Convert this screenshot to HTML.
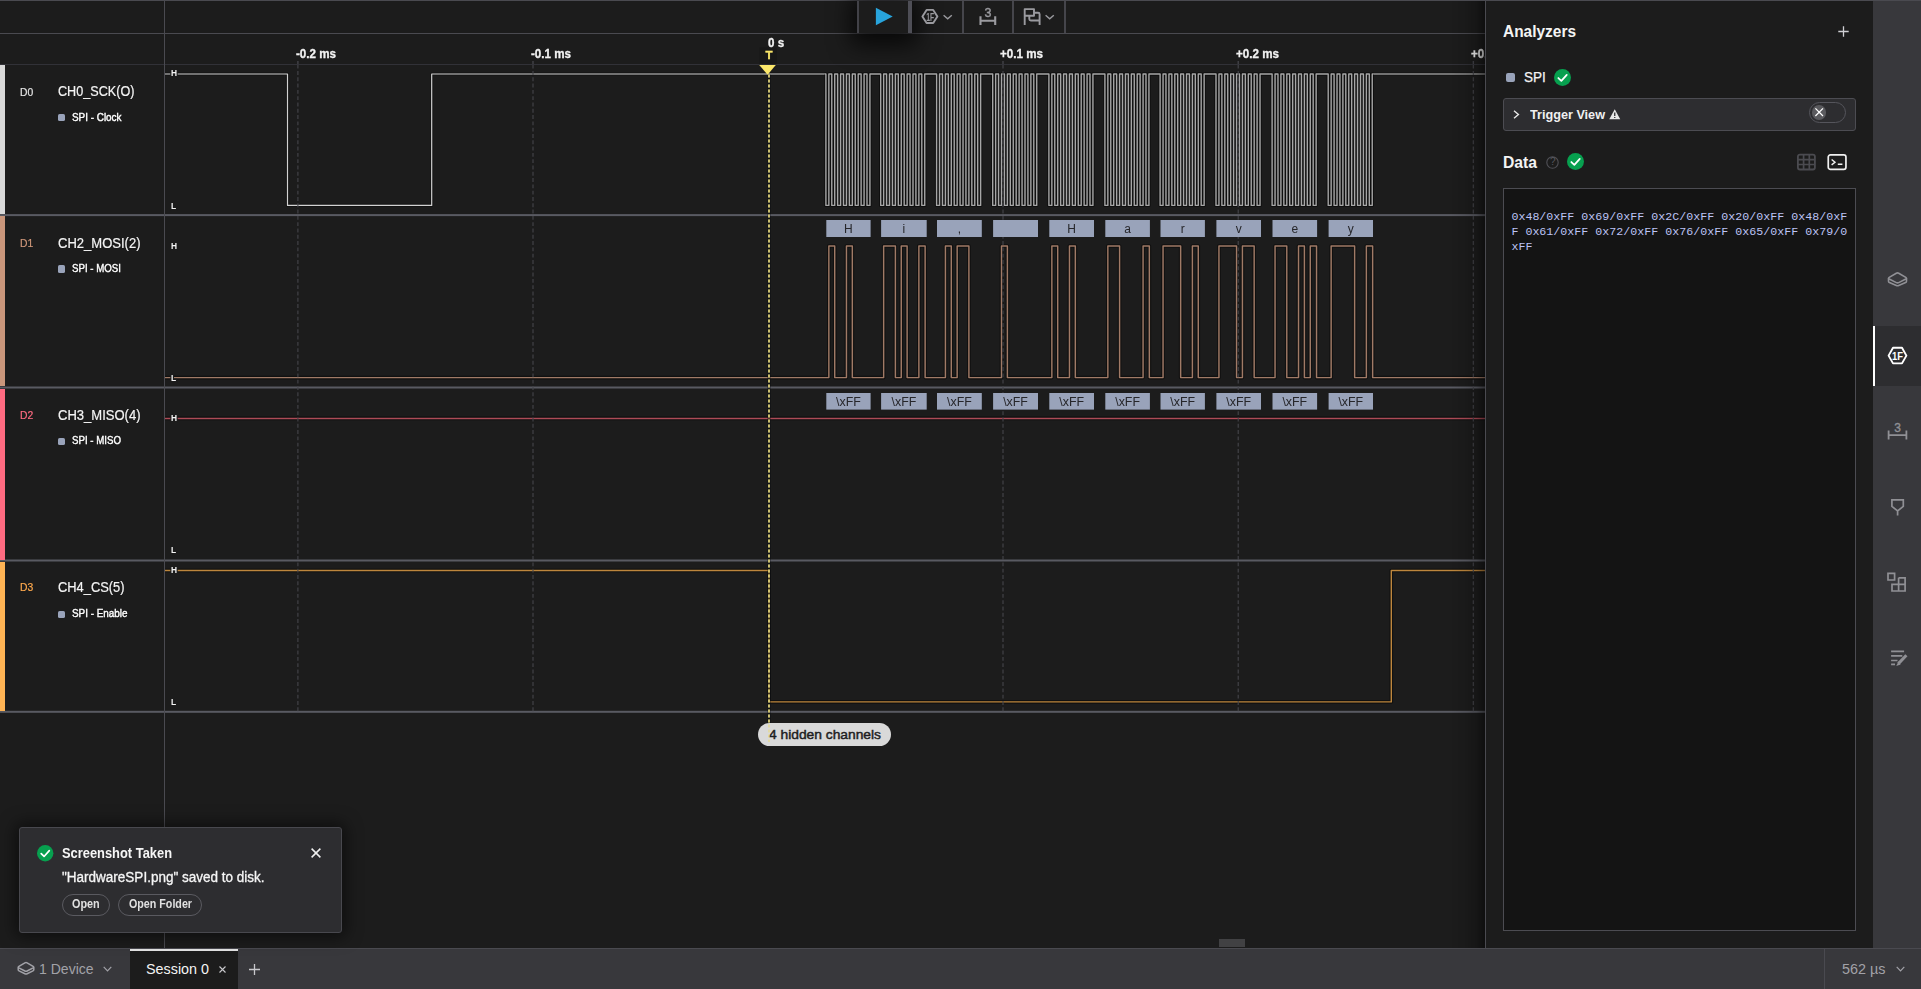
<!DOCTYPE html>
<html lang="en">
<head>
<meta charset="utf-8">
<title>Logic 2 - HardwareSPI</title>
<style>
html,body{margin:0;padding:0;}
body{width:1921px;height:989px;overflow:hidden;background:#1c1c1c;position:relative;
  font-family:"Liberation Sans",sans-serif;color:#f0f0f0;-webkit-font-smoothing:antialiased;}
*{box-sizing:border-box;}
.abs{position:absolute;}
.t{position:absolute;white-space:pre;line-height:1;transform-origin:0 0;display:block;}
#g{position:absolute;left:0;top:0;will-change:transform;}
#g text{font-family:"Liberation Sans",sans-serif;}
#g .an{font-size:12px;fill:#26262a;}
#g .hl{font-size:8.4px;font-weight:700;fill:#f4f4f4;}
#g .tt{font-size:11.5px;font-weight:700;fill:#fbe76a;}
/* top */
#topline{left:0;top:0;width:1921px;height:1px;background:#4a4a50;}
#tbline{left:0;top:33px;width:1486px;height:1px;background:#4a4a50;}
#toolbar{left:0;top:0;height:34px;width:1486px;}
#pshadow{left:859px;top:1px;width:50px;height:32px;box-shadow:0 4px 22px 8px rgba(0,0,0,.7);}
/* left labels */
.cbar{position:absolute;left:0;width:5.2px;}
.dn{font-size:11px;}
.cn{font-size:14px;color:#f4f4f4;}
.sq{position:absolute;left:58px;width:7px;height:7.4px;border-radius:1.6px;background:#99a3ba;}
.sn{font-size:11px;color:#fff;font-weight:400;-webkit-text-stroke:0.4px #fff;}
.tl{font-size:12px;font-weight:700;color:#f2f2f2;}
/* pill */
#pill{left:758.3px;top:722.6px;width:133px;height:23.4px;border-radius:12px;background:#d9d9d9;}
/* bottom bar */
#bbar{left:0;top:948px;width:1921px;height:41px;background:#38383c;border-top:1px solid #4a4a50;}
#tab{left:130px;top:948.7px;width:107.5px;height:41px;background:#1c1c1c;border-top:2.7px solid #e4e4e4;}
#zoomsec{left:1824px;top:949px;width:1px;height:40px;background:#4a4a50;}
/* right */
#rshadow{left:1452px;top:1px;width:34px;height:947px;background:linear-gradient(to right,rgba(0,0,0,0),rgba(0,0,0,.08) 40%,rgba(0,0,0,.2) 72%,rgba(0,0,0,.48));}
#rpanel{left:1485px;top:1px;width:388px;height:947px;background:#1c1c1c;border-left:1px solid #4a4a50;}
#rside{left:1873px;top:1px;width:48px;height:947px;background:#38383c;}
#ractive{left:1873px;top:326px;width:48px;height:59.5px;background:#2d2d30;border-left:2px solid #fff;}
#trig{left:1503px;top:98.3px;width:353px;height:32.4px;background:#2d2d30;border:1px solid #4c4c52;border-radius:3px;}
#toggle{left:1809px;top:102.4px;width:37px;height:20.4px;border:1px solid #55555c;border-radius:11px;background:#2d2d30;}
#knob{left:1812px;top:105.4px;width:14.4px;height:14.4px;border-radius:50%;background:#5a5a5e;}
#dbox{left:1503px;top:188.3px;width:353px;height:742.3px;background:#141414;border:1px solid #4c4c52;}
#dtxt{left:1511.4px;top:209.5px;width:340px;font-family:"Liberation Mono",monospace;font-size:11.67px;line-height:15.05px;color:#bdc3f5;white-space:pre;}
.gc{position:absolute;border-radius:50%;background:#0fa958;}
/* toast */
#toast{left:19.2px;top:827px;width:322.8px;height:105.6px;background:#2d2d30;border:1px solid #48484e;border-radius:3px;box-shadow:0 0 16px 4px rgba(0,0,0,.5);}
.pbtn{position:absolute;top:894.3px;height:21.4px;border:1px solid #5a5a60;border-radius:11px;}
#hscroll{left:1218.8px;top:939px;width:26px;height:7.8px;background:#414143;}
svg.ic{position:absolute;overflow:visible;}
</style>
</head>
<body>
<svg id="g" width="1486" height="949" viewBox="0 0 1486 949">
<rect x="0" y="64" width="1486" height="1" fill="#313137"/>
<rect x="0" y="214.1" width="1486" height="2" fill="#595a62"/>
<rect x="0" y="386.5" width="1486" height="2" fill="#595a62"/>
<rect x="0" y="559.5" width="1486" height="2" fill="#595a62"/>
<rect x="0" y="710.8" width="1486" height="2" fill="#595a62"/>
<rect x="164" y="0" width="1" height="949" fill="#4a4a50"/>
<path d="M165 74 L287.5 74 L287.5 205.4 L431.7 205.4 L431.7 74 L825.4 74" fill="none" stroke="#080808" stroke-width="3.2" stroke-linejoin="round" opacity="0.45"/>
<path d="M165 74 L287.5 74 L287.5 205.4 L431.7 205.4 L431.7 74 L825.4 74" fill="none" stroke="#d2d2d2" stroke-width="1.2" stroke-linejoin="round"/>
<path d="M1372.94 74 L1486 74" fill="none" stroke="#080808" stroke-width="3.2" stroke-linejoin="round" opacity="0.45"/>
<path d="M1372.94 74 L1486 74" fill="none" stroke="#d2d2d2" stroke-width="1.2" stroke-linejoin="round"/>
<path d="M824.7 74 L825.9 74 L825.9 205.4 L828.85 205.4 L828.85 74 L831.77 74 L831.77 205.4 L834.72 205.4 L834.72 74 L837.64 74 L837.64 205.4 L840.59 205.4 L840.59 74 L843.51 74 L843.51 205.4 L846.46 205.4 L846.46 74 L849.38 74 L849.38 205.4 L852.33 205.4 L852.33 74 L855.25 74 L855.25 205.4 L858.2 205.4 L858.2 74 L861.12 74 L861.12 205.4 L864.07 205.4 L864.07 74 L866.99 74 L866.99 205.4 L869.94 205.4 L869.94 74 L880.7 74 L880.7 205.4 L883.65 205.4 L883.65 74 L886.57 74 L886.57 205.4 L889.52 205.4 L889.52 74 L892.44 74 L892.44 205.4 L895.39 205.4 L895.39 74 L898.31 74 L898.31 205.4 L901.26 205.4 L901.26 74 L904.18 74 L904.18 205.4 L907.13 205.4 L907.13 74 L910.05 74 L910.05 205.4 L913 205.4 L913 74 L915.92 74 L915.92 205.4 L918.87 205.4 L918.87 74 L921.79 74 L921.79 205.4 L924.74 205.4 L924.74 74 L936.6 74 L936.6 205.4 L939.55 205.4 L939.55 74 L942.47 74 L942.47 205.4 L945.42 205.4 L945.42 74 L948.34 74 L948.34 205.4 L951.29 205.4 L951.29 74 L954.21 74 L954.21 205.4 L957.16 205.4 L957.16 74 L960.08 74 L960.08 205.4 L963.03 205.4 L963.03 74 L965.95 74 L965.95 205.4 L968.9 205.4 L968.9 74 L971.82 74 L971.82 205.4 L974.77 205.4 L974.77 74 L977.69 74 L977.69 205.4 L980.64 205.4 L980.64 74 L992.7 74 L992.7 205.4 L995.65 205.4 L995.65 74 L998.57 74 L998.57 205.4 L1001.52 205.4 L1001.52 74 L1004.44 74 L1004.44 205.4 L1007.39 205.4 L1007.39 74 L1010.31 74 L1010.31 205.4 L1013.26 205.4 L1013.26 74 L1016.18 74 L1016.18 205.4 L1019.13 205.4 L1019.13 74 L1022.05 74 L1022.05 205.4 L1025 205.4 L1025 74 L1027.92 74 L1027.92 205.4 L1030.87 205.4 L1030.87 74 L1033.79 74 L1033.79 205.4 L1036.74 205.4 L1036.74 74 L1048.9 74 L1048.9 205.4 L1051.85 205.4 L1051.85 74 L1054.77 74 L1054.77 205.4 L1057.72 205.4 L1057.72 74 L1060.64 74 L1060.64 205.4 L1063.59 205.4 L1063.59 74 L1066.51 74 L1066.51 205.4 L1069.46 205.4 L1069.46 74 L1072.38 74 L1072.38 205.4 L1075.33 205.4 L1075.33 74 L1078.25 74 L1078.25 205.4 L1081.2 205.4 L1081.2 74 L1084.12 74 L1084.12 205.4 L1087.07 205.4 L1087.07 74 L1089.99 74 L1089.99 205.4 L1092.94 205.4 L1092.94 74 L1104.9 74 L1104.9 205.4 L1107.85 205.4 L1107.85 74 L1110.77 74 L1110.77 205.4 L1113.72 205.4 L1113.72 74 L1116.64 74 L1116.64 205.4 L1119.59 205.4 L1119.59 74 L1122.51 74 L1122.51 205.4 L1125.46 205.4 L1125.46 74 L1128.38 74 L1128.38 205.4 L1131.33 205.4 L1131.33 74 L1134.25 74 L1134.25 205.4 L1137.2 205.4 L1137.2 74 L1140.12 74 L1140.12 205.4 L1143.07 205.4 L1143.07 74 L1145.99 74 L1145.99 205.4 L1148.94 205.4 L1148.94 74 L1160.1 74 L1160.1 205.4 L1163.05 205.4 L1163.05 74 L1165.97 74 L1165.97 205.4 L1168.92 205.4 L1168.92 74 L1171.84 74 L1171.84 205.4 L1174.79 205.4 L1174.79 74 L1177.71 74 L1177.71 205.4 L1180.66 205.4 L1180.66 74 L1183.58 74 L1183.58 205.4 L1186.53 205.4 L1186.53 74 L1189.45 74 L1189.45 205.4 L1192.4 205.4 L1192.4 74 L1195.32 74 L1195.32 205.4 L1198.27 205.4 L1198.27 74 L1201.19 74 L1201.19 205.4 L1204.14 205.4 L1204.14 74 L1216 74 L1216 205.4 L1218.95 205.4 L1218.95 74 L1221.87 74 L1221.87 205.4 L1224.82 205.4 L1224.82 74 L1227.74 74 L1227.74 205.4 L1230.69 205.4 L1230.69 74 L1233.61 74 L1233.61 205.4 L1236.56 205.4 L1236.56 74 L1239.48 74 L1239.48 205.4 L1242.43 205.4 L1242.43 74 L1245.35 74 L1245.35 205.4 L1248.3 205.4 L1248.3 74 L1251.22 74 L1251.22 205.4 L1254.17 205.4 L1254.17 74 L1257.09 74 L1257.09 205.4 L1260.04 205.4 L1260.04 74 L1272.1 74 L1272.1 205.4 L1275.05 205.4 L1275.05 74 L1277.97 74 L1277.97 205.4 L1280.92 205.4 L1280.92 74 L1283.84 74 L1283.84 205.4 L1286.79 205.4 L1286.79 74 L1289.71 74 L1289.71 205.4 L1292.66 205.4 L1292.66 74 L1295.58 74 L1295.58 205.4 L1298.53 205.4 L1298.53 74 L1301.45 74 L1301.45 205.4 L1304.4 205.4 L1304.4 74 L1307.32 74 L1307.32 205.4 L1310.27 205.4 L1310.27 74 L1313.19 74 L1313.19 205.4 L1316.14 205.4 L1316.14 74 L1328.2 74 L1328.2 205.4 L1331.15 205.4 L1331.15 74 L1334.07 74 L1334.07 205.4 L1337.02 205.4 L1337.02 74 L1339.94 74 L1339.94 205.4 L1342.89 205.4 L1342.89 74 L1345.81 74 L1345.81 205.4 L1348.76 205.4 L1348.76 74 L1351.68 74 L1351.68 205.4 L1354.63 205.4 L1354.63 74 L1357.55 74 L1357.55 205.4 L1360.5 205.4 L1360.5 74 L1363.42 74 L1363.42 205.4 L1366.37 205.4 L1366.37 74 L1369.29 74 L1369.29 205.4 L1372.24 205.4 L1372.24 74 L1373.44 74" fill="none" stroke="#080808" stroke-width="3.4" stroke-linejoin="round" opacity="0.62"/>
<path d="M824.7 74 L825.9 74 L825.9 205.4 L828.85 205.4 L828.85 74 L831.77 74 L831.77 205.4 L834.72 205.4 L834.72 74 L837.64 74 L837.64 205.4 L840.59 205.4 L840.59 74 L843.51 74 L843.51 205.4 L846.46 205.4 L846.46 74 L849.38 74 L849.38 205.4 L852.33 205.4 L852.33 74 L855.25 74 L855.25 205.4 L858.2 205.4 L858.2 74 L861.12 74 L861.12 205.4 L864.07 205.4 L864.07 74 L866.99 74 L866.99 205.4 L869.94 205.4 L869.94 74 L880.7 74 L880.7 205.4 L883.65 205.4 L883.65 74 L886.57 74 L886.57 205.4 L889.52 205.4 L889.52 74 L892.44 74 L892.44 205.4 L895.39 205.4 L895.39 74 L898.31 74 L898.31 205.4 L901.26 205.4 L901.26 74 L904.18 74 L904.18 205.4 L907.13 205.4 L907.13 74 L910.05 74 L910.05 205.4 L913 205.4 L913 74 L915.92 74 L915.92 205.4 L918.87 205.4 L918.87 74 L921.79 74 L921.79 205.4 L924.74 205.4 L924.74 74 L936.6 74 L936.6 205.4 L939.55 205.4 L939.55 74 L942.47 74 L942.47 205.4 L945.42 205.4 L945.42 74 L948.34 74 L948.34 205.4 L951.29 205.4 L951.29 74 L954.21 74 L954.21 205.4 L957.16 205.4 L957.16 74 L960.08 74 L960.08 205.4 L963.03 205.4 L963.03 74 L965.95 74 L965.95 205.4 L968.9 205.4 L968.9 74 L971.82 74 L971.82 205.4 L974.77 205.4 L974.77 74 L977.69 74 L977.69 205.4 L980.64 205.4 L980.64 74 L992.7 74 L992.7 205.4 L995.65 205.4 L995.65 74 L998.57 74 L998.57 205.4 L1001.52 205.4 L1001.52 74 L1004.44 74 L1004.44 205.4 L1007.39 205.4 L1007.39 74 L1010.31 74 L1010.31 205.4 L1013.26 205.4 L1013.26 74 L1016.18 74 L1016.18 205.4 L1019.13 205.4 L1019.13 74 L1022.05 74 L1022.05 205.4 L1025 205.4 L1025 74 L1027.92 74 L1027.92 205.4 L1030.87 205.4 L1030.87 74 L1033.79 74 L1033.79 205.4 L1036.74 205.4 L1036.74 74 L1048.9 74 L1048.9 205.4 L1051.85 205.4 L1051.85 74 L1054.77 74 L1054.77 205.4 L1057.72 205.4 L1057.72 74 L1060.64 74 L1060.64 205.4 L1063.59 205.4 L1063.59 74 L1066.51 74 L1066.51 205.4 L1069.46 205.4 L1069.46 74 L1072.38 74 L1072.38 205.4 L1075.33 205.4 L1075.33 74 L1078.25 74 L1078.25 205.4 L1081.2 205.4 L1081.2 74 L1084.12 74 L1084.12 205.4 L1087.07 205.4 L1087.07 74 L1089.99 74 L1089.99 205.4 L1092.94 205.4 L1092.94 74 L1104.9 74 L1104.9 205.4 L1107.85 205.4 L1107.85 74 L1110.77 74 L1110.77 205.4 L1113.72 205.4 L1113.72 74 L1116.64 74 L1116.64 205.4 L1119.59 205.4 L1119.59 74 L1122.51 74 L1122.51 205.4 L1125.46 205.4 L1125.46 74 L1128.38 74 L1128.38 205.4 L1131.33 205.4 L1131.33 74 L1134.25 74 L1134.25 205.4 L1137.2 205.4 L1137.2 74 L1140.12 74 L1140.12 205.4 L1143.07 205.4 L1143.07 74 L1145.99 74 L1145.99 205.4 L1148.94 205.4 L1148.94 74 L1160.1 74 L1160.1 205.4 L1163.05 205.4 L1163.05 74 L1165.97 74 L1165.97 205.4 L1168.92 205.4 L1168.92 74 L1171.84 74 L1171.84 205.4 L1174.79 205.4 L1174.79 74 L1177.71 74 L1177.71 205.4 L1180.66 205.4 L1180.66 74 L1183.58 74 L1183.58 205.4 L1186.53 205.4 L1186.53 74 L1189.45 74 L1189.45 205.4 L1192.4 205.4 L1192.4 74 L1195.32 74 L1195.32 205.4 L1198.27 205.4 L1198.27 74 L1201.19 74 L1201.19 205.4 L1204.14 205.4 L1204.14 74 L1216 74 L1216 205.4 L1218.95 205.4 L1218.95 74 L1221.87 74 L1221.87 205.4 L1224.82 205.4 L1224.82 74 L1227.74 74 L1227.74 205.4 L1230.69 205.4 L1230.69 74 L1233.61 74 L1233.61 205.4 L1236.56 205.4 L1236.56 74 L1239.48 74 L1239.48 205.4 L1242.43 205.4 L1242.43 74 L1245.35 74 L1245.35 205.4 L1248.3 205.4 L1248.3 74 L1251.22 74 L1251.22 205.4 L1254.17 205.4 L1254.17 74 L1257.09 74 L1257.09 205.4 L1260.04 205.4 L1260.04 74 L1272.1 74 L1272.1 205.4 L1275.05 205.4 L1275.05 74 L1277.97 74 L1277.97 205.4 L1280.92 205.4 L1280.92 74 L1283.84 74 L1283.84 205.4 L1286.79 205.4 L1286.79 74 L1289.71 74 L1289.71 205.4 L1292.66 205.4 L1292.66 74 L1295.58 74 L1295.58 205.4 L1298.53 205.4 L1298.53 74 L1301.45 74 L1301.45 205.4 L1304.4 205.4 L1304.4 74 L1307.32 74 L1307.32 205.4 L1310.27 205.4 L1310.27 74 L1313.19 74 L1313.19 205.4 L1316.14 205.4 L1316.14 74 L1328.2 74 L1328.2 205.4 L1331.15 205.4 L1331.15 74 L1334.07 74 L1334.07 205.4 L1337.02 205.4 L1337.02 74 L1339.94 74 L1339.94 205.4 L1342.89 205.4 L1342.89 74 L1345.81 74 L1345.81 205.4 L1348.76 205.4 L1348.76 74 L1351.68 74 L1351.68 205.4 L1354.63 205.4 L1354.63 74 L1357.55 74 L1357.55 205.4 L1360.5 205.4 L1360.5 74 L1363.42 74 L1363.42 205.4 L1366.37 205.4 L1366.37 74 L1369.29 74 L1369.29 205.4 L1372.24 205.4 L1372.24 74 L1373.44 74" fill="none" stroke="#a6a6a6" stroke-width="1.4" stroke-linejoin="round"/>
<path d="M165 377.6 L828.85 377.6 L828.85 246 L834.72 246 L834.72 377.6 L846.46 377.6 L846.46 246 L852.33 246 L852.33 377.6 L883.65 377.6 L883.65 246 L895.39 246 L895.39 377.6 L901.26 377.6 L901.26 246 L907.13 246 L907.13 377.6 L918.87 377.6 L918.87 246 L925.14 246 L925.14 377.6 L945.42 377.6 L945.42 246 L951.29 246 L951.29 377.6 L957.16 377.6 L957.16 246 L968.9 246 L968.9 377.6 L1001.52 377.6 L1001.52 246 L1007.39 246 L1007.39 377.6 L1051.85 377.6 L1051.85 246 L1057.72 246 L1057.72 377.6 L1069.46 377.6 L1069.46 246 L1075.33 246 L1075.33 377.6 L1107.85 377.6 L1107.85 246 L1119.59 246 L1119.59 377.6 L1143.07 377.6 L1143.07 246 L1149.34 246 L1149.34 377.6 L1163.05 377.6 L1163.05 246 L1180.66 246 L1180.66 377.6 L1192.4 377.6 L1192.4 246 L1198.27 246 L1198.27 377.6 L1218.95 377.6 L1218.95 246 L1236.56 246 L1236.56 377.6 L1242.43 377.6 L1242.43 246 L1254.17 246 L1254.17 377.6 L1275.05 377.6 L1275.05 246 L1286.79 246 L1286.79 377.6 L1298.53 377.6 L1298.53 246 L1304.4 246 L1304.4 377.6 L1310.27 377.6 L1310.27 246 L1316.54 246 L1316.54 377.6 L1331.15 377.6 L1331.15 246 L1354.63 246 L1354.63 377.6 L1366.37 377.6 L1366.37 246 L1372.64 246 L1372.64 377.6 L1486 377.6" fill="none" stroke="#080808" stroke-width="3.6500000000000004" stroke-linejoin="round" opacity="0.6"/>
<path d="M165 377.6 L828.85 377.6 L828.85 246 L834.72 246 L834.72 377.6 L846.46 377.6 L846.46 246 L852.33 246 L852.33 377.6 L883.65 377.6 L883.65 246 L895.39 246 L895.39 377.6 L901.26 377.6 L901.26 246 L907.13 246 L907.13 377.6 L918.87 377.6 L918.87 246 L925.14 246 L925.14 377.6 L945.42 377.6 L945.42 246 L951.29 246 L951.29 377.6 L957.16 377.6 L957.16 246 L968.9 246 L968.9 377.6 L1001.52 377.6 L1001.52 246 L1007.39 246 L1007.39 377.6 L1051.85 377.6 L1051.85 246 L1057.72 246 L1057.72 377.6 L1069.46 377.6 L1069.46 246 L1075.33 246 L1075.33 377.6 L1107.85 377.6 L1107.85 246 L1119.59 246 L1119.59 377.6 L1143.07 377.6 L1143.07 246 L1149.34 246 L1149.34 377.6 L1163.05 377.6 L1163.05 246 L1180.66 246 L1180.66 377.6 L1192.4 377.6 L1192.4 246 L1198.27 246 L1198.27 377.6 L1218.95 377.6 L1218.95 246 L1236.56 246 L1236.56 377.6 L1242.43 377.6 L1242.43 246 L1254.17 246 L1254.17 377.6 L1275.05 377.6 L1275.05 246 L1286.79 246 L1286.79 377.6 L1298.53 377.6 L1298.53 246 L1304.4 246 L1304.4 377.6 L1310.27 377.6 L1310.27 246 L1316.54 246 L1316.54 377.6 L1331.15 377.6 L1331.15 246 L1354.63 246 L1354.63 377.6 L1366.37 377.6 L1366.37 246 L1372.64 246 L1372.64 377.6 L1486 377.6" fill="none" stroke="#a07a66" stroke-width="1.45" stroke-linejoin="round"/>
<path d="M165 418.4 L1486 418.4" fill="none" stroke="#080808" stroke-width="3.7" stroke-linejoin="round" opacity="0.6"/>
<path d="M165 418.4 L1486 418.4" fill="none" stroke="#ad4b57" stroke-width="1.5" stroke-linejoin="round"/>
<path d="M165 570.5 L769 570.5 L769 701.9 L1391.3 701.9 L1391.3 570.5 L1486 570.5" fill="none" stroke="#080808" stroke-width="3.6" stroke-linejoin="round" opacity="0.6"/>
<path d="M165 570.5 L769 570.5 L769 701.9 L1391.3 701.9 L1391.3 570.5 L1486 570.5" fill="none" stroke="#bd863d" stroke-width="1.4" stroke-linejoin="round"/>
<line x1="297.9" y1="61" x2="297.9" y2="64" stroke="#48484f" stroke-width="1.2"/>
<line x1="297.9" y1="64.7" x2="297.9" y2="712" stroke="#45454b" stroke-width="1.1" stroke-dasharray="3.9 2.4"/>
<line x1="533.0" y1="61" x2="533.0" y2="64" stroke="#48484f" stroke-width="1.2"/>
<line x1="533.0" y1="64.7" x2="533.0" y2="712" stroke="#45454b" stroke-width="1.1" stroke-dasharray="3.9 2.4"/>
<line x1="1003.0" y1="61" x2="1003.0" y2="64" stroke="#48484f" stroke-width="1.2"/>
<line x1="1003.0" y1="64.7" x2="1003.0" y2="712" stroke="#45454b" stroke-width="1.1" stroke-dasharray="3.9 2.4"/>
<line x1="1238.2" y1="61" x2="1238.2" y2="64" stroke="#48484f" stroke-width="1.2"/>
<line x1="1238.2" y1="64.7" x2="1238.2" y2="712" stroke="#45454b" stroke-width="1.1" stroke-dasharray="3.9 2.4"/>
<line x1="1473.3" y1="61" x2="1473.3" y2="64" stroke="#48484f" stroke-width="1.2"/>
<line x1="1473.3" y1="64.7" x2="1473.3" y2="712" stroke="#45454b" stroke-width="1.1" stroke-dasharray="3.9 2.4"/>
<rect x="826.3" y="220" width="44.3" height="17" fill="#99a3ba"/>
<text x="848.45" y="233.2" text-anchor="middle" class="an">H</text>
<rect x="826.3" y="393" width="44.3" height="16.6" fill="#99a3ba"/>
<text x="848.45" y="406" text-anchor="middle" class="an" textLength="24.8" lengthAdjust="spacingAndGlyphs">\xFF</text>
<rect x="881.1" y="220" width="45.6" height="17" fill="#99a3ba"/>
<text x="903.9" y="233.2" text-anchor="middle" class="an">i</text>
<rect x="881.1" y="393" width="45.6" height="16.6" fill="#99a3ba"/>
<text x="903.9" y="406" text-anchor="middle" class="an" textLength="24.8" lengthAdjust="spacingAndGlyphs">\xFF</text>
<rect x="937" y="220" width="44.8" height="17" fill="#99a3ba"/>
<text x="959.4" y="233.2" text-anchor="middle" class="an">,</text>
<rect x="937" y="393" width="44.8" height="16.6" fill="#99a3ba"/>
<text x="959.4" y="406" text-anchor="middle" class="an" textLength="24.8" lengthAdjust="spacingAndGlyphs">\xFF</text>
<rect x="993.1" y="220" width="44.9" height="17" fill="#99a3ba"/>
<rect x="993.1" y="393" width="44.9" height="16.6" fill="#99a3ba"/>
<text x="1015.55" y="406" text-anchor="middle" class="an" textLength="24.8" lengthAdjust="spacingAndGlyphs">\xFF</text>
<rect x="1049.3" y="220" width="44.7" height="17" fill="#99a3ba"/>
<text x="1071.65" y="233.2" text-anchor="middle" class="an">H</text>
<rect x="1049.3" y="393" width="44.7" height="16.6" fill="#99a3ba"/>
<text x="1071.65" y="406" text-anchor="middle" class="an" textLength="24.8" lengthAdjust="spacingAndGlyphs">\xFF</text>
<rect x="1105.3" y="220" width="44.6" height="17" fill="#99a3ba"/>
<text x="1127.6" y="233.2" text-anchor="middle" class="an">a</text>
<rect x="1105.3" y="393" width="44.6" height="16.6" fill="#99a3ba"/>
<text x="1127.6" y="406" text-anchor="middle" class="an" textLength="24.8" lengthAdjust="spacingAndGlyphs">\xFF</text>
<rect x="1160.5" y="220" width="44.4" height="17" fill="#99a3ba"/>
<text x="1182.7" y="233.2" text-anchor="middle" class="an">r</text>
<rect x="1160.5" y="393" width="44.4" height="16.6" fill="#99a3ba"/>
<text x="1182.7" y="406" text-anchor="middle" class="an" textLength="24.8" lengthAdjust="spacingAndGlyphs">\xFF</text>
<rect x="1216.4" y="220" width="44.6" height="17" fill="#99a3ba"/>
<text x="1238.7" y="233.2" text-anchor="middle" class="an">v</text>
<rect x="1216.4" y="393" width="44.6" height="16.6" fill="#99a3ba"/>
<text x="1238.7" y="406" text-anchor="middle" class="an" textLength="24.8" lengthAdjust="spacingAndGlyphs">\xFF</text>
<rect x="1272.5" y="220" width="44.6" height="17" fill="#99a3ba"/>
<text x="1294.8" y="233.2" text-anchor="middle" class="an">e</text>
<rect x="1272.5" y="393" width="44.6" height="16.6" fill="#99a3ba"/>
<text x="1294.8" y="406" text-anchor="middle" class="an" textLength="24.8" lengthAdjust="spacingAndGlyphs">\xFF</text>
<rect x="1328.6" y="220" width="44.4" height="17" fill="#99a3ba"/>
<text x="1350.8" y="233.2" text-anchor="middle" class="an">y</text>
<rect x="1328.6" y="393" width="44.4" height="16.6" fill="#99a3ba"/>
<text x="1350.8" y="406" text-anchor="middle" class="an" textLength="24.8" lengthAdjust="spacingAndGlyphs">\xFF</text>
<text x="171" y="76" class="hl" stroke="#1c1c1c" stroke-width="2.5" paint-order="stroke">H</text>
<text x="171" y="208.5" class="hl" stroke="#1c1c1c" stroke-width="2.5" paint-order="stroke">L</text>
<text x="171" y="248.8" class="hl" stroke="#1c1c1c" stroke-width="2.5" paint-order="stroke">H</text>
<text x="171" y="381" class="hl" stroke="#1c1c1c" stroke-width="2.5" paint-order="stroke">L</text>
<text x="171" y="421" class="hl" stroke="#1c1c1c" stroke-width="2.5" paint-order="stroke">H</text>
<text x="171" y="553.3" class="hl" stroke="#1c1c1c" stroke-width="2.5" paint-order="stroke">L</text>
<text x="171" y="572.7" class="hl" stroke="#1c1c1c" stroke-width="2.5" paint-order="stroke">H</text>
<text x="171" y="704.7" class="hl" stroke="#1c1c1c" stroke-width="2.5" paint-order="stroke">L</text>
<rect x="759.4" y="47.6" width="17.3" height="16.6" fill="#181818"/>
<text x="769" y="59" text-anchor="middle" class="tt" stroke="#fbe76a" stroke-width="0.35">T</text>
<path d="M759.2 65 L775.8 65 L767.6 74.8 Z" fill="#fbe76a"/>
<line x1="769" y1="74.6" x2="769" y2="742" stroke="#060a10" stroke-width="3.2" opacity="0.5"/>
<line x1="769" y1="74.6" x2="769" y2="742" stroke="#dbc95b" stroke-width="1.35" stroke-dasharray="3 2"/>
</svg>
<div class="abs" id="topline"></div><div class="abs" id="tbline"></div>
<div class="t" style="left:295.80px;top:48.14px;font-size:12px;font-weight:700;color:#f2f2f2;transform:scaleX(0.9671);-webkit-text-stroke:0.3px #f2f2f2;">-0.2 ms</div>
<div class="t" style="left:530.80px;top:48.14px;font-size:12px;font-weight:700;color:#f2f2f2;transform:scaleX(0.9671);-webkit-text-stroke:0.3px #f2f2f2;">-0.1 ms</div>
<div class="t" style="left:1000.30px;top:48.14px;font-size:12px;font-weight:700;color:#f2f2f2;transform:scaleX(0.9690);-webkit-text-stroke:0.3px #f2f2f2;">+0.1 ms</div>
<div class="t" style="left:1235.50px;top:48.14px;font-size:12px;font-weight:700;color:#f2f2f2;transform:scaleX(0.9690);-webkit-text-stroke:0.3px #f2f2f2;">+0.2 ms</div>
<div class="t" style="left:1470.60px;top:48.14px;font-size:12px;font-weight:700;color:#f2f2f2;transform:scaleX(0.9690);-webkit-text-stroke:0.3px #f2f2f2;">+0.3 ms</div>
<div class="t" style="left:768.20px;top:36.54px;font-size:12px;font-weight:700;color:#f2f2f2;transform:scaleX(0.9648);-webkit-text-stroke:0.3px #f2f2f2;">0 s</div>
<div class="abs" id="pshadow"></div>
<div class="abs" id="toolbar">
<div class="abs" style="left:857px;top:1px;width:2px;height:32px;background:#424248"></div>
<div class="abs" style="left:908.4px;top:1px;width:3.2px;height:32px;background:#4e4e56"></div>
<div class="abs" style="left:962.2px;top:1px;width:1.8px;height:32px;background:#45454b"></div>
<div class="abs" style="left:1012.1px;top:1px;width:1.8px;height:32px;background:#45454b"></div>
<div class="abs" style="left:1064px;top:1px;width:1.8px;height:32px;background:#45454b"></div>
<svg class="ic" style="left:857px;top:0" width="210" height="34" viewBox="857 0 210 34">
<path d="M875.9 7.7 L892.7 16.5 L875.9 25.3 Z" fill="#28a4dc"/>
<path d="M926.6 9.9 H933.2 L937.4 16.45 L933.2 23 H926.6 L922.4 16.45 Z" fill="none" stroke="#9a9a9f" stroke-width="1.9" stroke-linejoin="round"/>
<text x="930.2" y="20.6" text-anchor="middle" font-size="11" font-weight="700" fill="#9a9a9f" textLength="7.9" lengthAdjust="spacingAndGlyphs" font-family="Liberation Sans, sans-serif">1F</text>
<path d="M943.6 15.3 L947.7 18.9 L951.8 15.3" fill="none" stroke="#9a9a9f" stroke-width="1.4"/>
<path d="M980.5 16.2 V24.9 M995.2 16.2 V24.9 M980.5 20.8 H995.2" fill="none" stroke="#9a9a9f" stroke-width="2.1"/>
<text x="987.9" y="17.2" text-anchor="middle" font-size="12.5" fill="#9a9a9f" stroke="#9a9a9f" stroke-width="0.4" font-family="Liberation Sans, sans-serif">3</text>
<path d="M1024.7 25 V9.1 H1034 V15.8 H1024.7 M1034 12.8 H1038.1 Q1039.6 12.8 1039.6 14.3 V25 M1039.6 20.5 H1030.8 Q1029.3 20.5 1029.3 19 V16.5" fill="none" stroke="#9a9a9f" stroke-width="1.9" stroke-linejoin="round"/>
<path d="M1045.6 15.3 L1049.7 18.9 L1053.8 15.3" fill="none" stroke="#9a9a9f" stroke-width="1.4"/>
</svg>
</div>
<div class="cbar" style="top:65px;height:149.1px;background:#d9d9d9"></div>
<div class="t" style="left:20.10px;top:86.59px;font-size:11px;color:#e4e4e4;transform:scaleX(0.9387);-webkit-text-stroke:0.2px #e4e4e4;">D0</div>
<div class="t" style="left:58.10px;top:84.25px;font-size:14px;color:#f4f4f4;transform:scaleX(0.9010);-webkit-text-stroke:0.2px #f4f4f4;">CH0_SCK(O)</div>
<div class="sq" style="top:113.9px"></div>
<div class="t sn" style="left:71.70px;top:111.59px;font-size:11px;color:#ffffff;transform:scaleX(0.8997);">SPI - Clock</div>
<div class="cbar" style="top:216.1px;height:170.4px;background:#c9967b"></div>
<div class="t" style="left:20.10px;top:238.19px;font-size:11px;color:#d0977a;transform:scaleX(0.9387);-webkit-text-stroke:0.2px #d0977a;">D1</div>
<div class="t" style="left:58.10px;top:235.85px;font-size:14px;color:#f4f4f4;transform:scaleX(0.9302);-webkit-text-stroke:0.2px #f4f4f4;">CH2_MOSI(2)</div>
<div class="sq" style="top:265.3px"></div>
<div class="t sn" style="left:71.70px;top:263.09px;font-size:11px;color:#ffffff;transform:scaleX(0.8809);">SPI - MOSI</div>
<div class="cbar" style="top:388.5px;height:171.0px;background:#ff6b81"></div>
<div class="t" style="left:20.10px;top:410.49px;font-size:11px;color:#ff6b81;transform:scaleX(0.9387);-webkit-text-stroke:0.2px #ff6b81;">D2</div>
<div class="t" style="left:58.10px;top:408.15px;font-size:14px;color:#f4f4f4;transform:scaleX(0.9302);-webkit-text-stroke:0.2px #f4f4f4;">CH3_MISO(4)</div>
<div class="sq" style="top:437.6px"></div>
<div class="t sn" style="left:71.70px;top:435.39px;font-size:11px;color:#ffffff;transform:scaleX(0.8809);">SPI - MISO</div>
<div class="cbar" style="top:561.5px;height:149.29999999999995px;background:#ffb454"></div>
<div class="t" style="left:20.10px;top:582.39px;font-size:11px;color:#ffa94d;transform:scaleX(0.9387);-webkit-text-stroke:0.2px #ffa94d;">D3</div>
<div class="t" style="left:58.10px;top:580.05px;font-size:14px;color:#f4f4f4;transform:scaleX(0.9190);-webkit-text-stroke:0.2px #f4f4f4;">CH4_CS(5)</div>
<div class="sq" style="top:610.5px"></div>
<div class="t sn" style="left:71.70px;top:608.29px;font-size:11px;color:#ffffff;transform:scaleX(0.8986);">SPI - Enable</div>
<div class="abs" id="pill"></div>
<div class="t" style="left:769.00px;top:727.70px;font-size:13px;color:#1e1e22;transform:scaleX(1.0613);-webkit-text-stroke:0.45px #1e1e22;">4 hidden channels</div>
<svg class="ic" style="left:766px;top:722px" width="6" height="21" viewBox="766 722 6 21"><line x1="769" y1="74.6" x2="769" y2="742" stroke="#e9dc8a" stroke-width="1.6" stroke-dasharray="3 2" opacity="0.8"/></svg>
<div class="abs" id="rshadow"></div><div class="abs" id="rpanel"></div><div class="abs" id="rside"></div><div class="abs" id="ractive"></div>
<div class="t" style="left:1503.20px;top:24.16px;font-size:16px;font-weight:700;color:#f4f4f4;transform:scaleX(0.9657);">Analyzers</div>
<svg class="ic" style="left:1838px;top:26px" width="11" height="11"><path d="M5.5 0.3V10.7M0.3 5.5H10.7" stroke="#d0d0d4" stroke-width="1.3" fill="none"/></svg>
<div class="abs" style="left:1505.8px;top:73.1px;width:9.2px;height:9px;border-radius:2px;background:#99a3ba"></div>
<div class="t" style="left:1523.70px;top:69.73px;font-size:14.5px;color:#f4f4f4;transform:scaleX(0.9326);-webkit-text-stroke:0.25px #f4f4f4;">SPI</div>
<svg class="ic" style="left:1553.8px;top:69.0px" width="17" height="17" viewBox="0 0 16 16"><circle cx="8" cy="8" r="8" fill="#07a04f"/><path d="M4.1 8.5 L6.9 11.2 L12 5.5" stroke="#fff" stroke-width="1.65" fill="none" stroke-linecap="round" stroke-linejoin="round"/></svg>
<div class="abs" id="trig"></div>
<svg class="ic" style="left:1513px;top:110.4px" width="7" height="9"><path d="M1 0.8 L5.4 4.5 L1 8.2" stroke="#e8e8e8" stroke-width="1.4" fill="none"/></svg>
<div class="t" style="left:1529.70px;top:107.77px;font-size:13.5px;font-weight:700;color:#f0f0f0;transform:scaleX(0.9371);">Trigger View</div>
<svg class="ic" style="left:1608.8px;top:109px" width="11.5" height="10.4" viewBox="0 0 23 21"><path d="M11.5 0.5 L22.6 20.5 L0.4 20.5 Z" fill="#e8e8e8"/><path d="M11.5 7 V14 M11.5 16.2 V18.4" stroke="#2d2d30" stroke-width="2.6"/></svg>
<div class="abs" id="toggle"></div><div class="abs" id="knob"></div>
<svg class="ic" style="left:1815px;top:108.4px" width="8.4" height="8.4"><path d="M0.4 0.4 L8 8 M8 0.4 L0.4 8" stroke="#fff" stroke-width="1.25"/></svg>
<div class="t" style="left:1503.20px;top:155.26px;font-size:16px;font-weight:700;color:#f4f4f4;transform:scaleX(0.9802);">Data</div>
<svg class="ic" style="left:1546px;top:155.5px" width="13" height="13" viewBox="0 0 13 13"><circle cx="6.5" cy="6.5" r="5.7" fill="none" stroke="#505056" stroke-width="1.1"/></svg>
<div class="t" style="left:1549.70px;top:156.94px;font-size:10px;color:#58585e;transform:scaleX(1.0067);">?</div>
<svg class="ic" style="left:1566.8px;top:153.2px" width="17" height="17" viewBox="0 0 16 16"><circle cx="8" cy="8" r="8" fill="#07a04f"/><path d="M4.1 8.5 L6.9 11.2 L12 5.5" stroke="#fff" stroke-width="1.65" fill="none" stroke-linecap="round" stroke-linejoin="round"/></svg>
<svg class="ic" style="left:1797.3px;top:153.7px" width="19" height="16" viewBox="0 0 19 16"><rect x="0.9" y="0.6" width="17.0" height="14.9" rx="2" fill="none" stroke="#4b4b50" stroke-width="1.8"/><path d="M0.9 5.6H17.9M0.9 10.5H17.9M6.6 0.6V15.5M12.3 0.6V15.5" stroke="#4b4b50" stroke-width="1.7"/></svg>
<svg class="ic" style="left:1827.4px;top:153.7px" width="20" height="16.4" viewBox="0 0 20 16.4"><rect x="1.25" y="0.85" width="17.7" height="14.5" rx="2.2" fill="none" stroke="#f0f0f0" stroke-width="1.7"/><path d="M4.6 5.5 L8 8.2 L4.6 10.9 M10.8 10.3 H15.4" stroke="#f0f0f0" stroke-width="1.4" fill="none"/></svg>
<div class="abs" id="dbox"></div>
<div class="abs" id="dtxt">0x48/0xFF 0x69/0xFF 0x2C/0xFF 0x20/0xFF 0x48/0xF
F 0x61/0xFF 0x72/0xFF 0x76/0xFF 0x65/0xFF 0x79/0
xFF</div>
<svg class="ic" style="left:1873px;top:260px" width="48" height="420" viewBox="1873 260 48 420">
<path d="M1889.2 277.4 Q1887.9 278.2 1889.2 279 L1896.3 282.6 Q1897.5 283.2 1898.7 282.6 L1905.8 279 Q1907.1 278.2 1905.8 277.4 L1898.7 273.2 Q1897.5 272.5 1896.3 273.2 Z" fill="none" stroke="#909095" stroke-width="1.6" stroke-linejoin="round"/>
<path d="M1888.5 278.2 V281.2 Q1888.5 282 1889.4 282.5 L1896.3 285.5 Q1897.5 286 1898.7 285.5 L1905.6 282.5 Q1906.5 282 1906.5 281.2 V278.2" fill="none" stroke="#909095" stroke-width="1.6" stroke-linejoin="round"/>
<path d="M1893 347.8 H1902 L1906.4 355.6 L1902 363.4 H1893 L1888.6 355.6 Z" fill="none" stroke="#fff" stroke-width="1.9" stroke-linejoin="round"/>
<text x="1897.6" y="359.6" text-anchor="middle" font-size="10.5" font-weight="700" fill="#fff" textLength="11" lengthAdjust="spacingAndGlyphs" font-family="Liberation Sans, sans-serif">1F</text>
<path d="M1888.6 430.6 V439.6 M1906.4 430.6 V439.6 M1888.6 435.1 H1906.4" stroke="#909095" stroke-width="1.8" fill="none"/>
<text x="1897.5" y="431.7" text-anchor="middle" font-size="12" fill="#909095" stroke="#909095" stroke-width="0.35" font-family="Liberation Sans, sans-serif">3</text>
<path d="M1891.9 499.8 H1903.3 V506.3 L1897.6 510.9 L1891.9 506.3 Z M1897.6 510.9 V515.4" fill="none" stroke="#909095" stroke-width="1.7" stroke-linejoin="miter"/>
<path d="M1888 573.4 H1894.6 V580 H1888 Z M1898.6 577.8 H1905.1 V591 H1892 V584.4 H1905.1 M1898.6 577.8 V591" fill="none" stroke="#909095" stroke-width="1.7"/>
<path d="M1891.1 651.3 H1904.1 M1891.1 655.9 H1902.3 M1891.1 660.5 H1897.5 M1891.1 664.4 H1895" stroke="#909095" stroke-width="1.7" fill="none"/>
<path d="M1906.4 655.2 L1898.4 663.6" stroke="#909095" stroke-width="3" fill="none"/><path d="M1898.4 661.4 L1896.3 666 L1900.6 664.4 Z" fill="#909095"/>
</svg>
<div class="abs" id="hscroll"></div>
<div class="abs" id="bbar"></div><div class="abs" id="tab"></div><div class="abs" id="zoomsec"></div>
<svg class="ic" style="left:16.8px;top:961px" width="18" height="15" viewBox="0 0 18 15"><path d="M1.9 5.4 Q0.8 6.1 1.9 6.8 L7.9 10 Q9 10.6 10.1 10 L16.1 6.8 Q17.2 6.1 16.1 5.4 L10.1 1.8 Q9 1.2 7.9 1.8 Z M1.2 6.1 V8.8 Q1.2 9.5 2 9.9 L7.9 12.7 Q9 13.2 10.1 12.7 L16 9.9 Q16.8 9.5 16.8 8.8 V6.1" fill="none" stroke="#a2a2a8" stroke-width="1.5" stroke-linejoin="round"/></svg>
<div class="t" style="left:38.50px;top:961.20px;font-size:15px;color:#a2a2a8;transform:scaleX(0.9356);">1 Device</div>
<svg class="ic" style="left:103.4px;top:966px" width="9" height="6"><path d="M0.7 0.8 L4.5 4.8 L8.3 0.8" stroke="#a2a2a8" stroke-width="1.2" fill="none"/></svg>
<div class="t" style="left:146.40px;top:961.20px;font-size:15px;color:#f4f4f4;transform:scaleX(0.9564);">Session 0</div>
<svg class="ic" style="left:218.6px;top:966px" width="7" height="7"><path d="M0.5 0.5 L6.5 6.5 M6.5 0.5 L0.5 6.5" stroke="#c8c8cc" stroke-width="1.1"/></svg>
<svg class="ic" style="left:249px;top:964px" width="11" height="11"><path d="M5.5 0 V11 M0 5.5 H11" stroke="#c8c8cc" stroke-width="1.3"/></svg>
<div class="t" style="left:1842.40px;top:961.20px;font-size:15px;color:#a2a2a8;transform:scaleX(0.9593);">562 µs</div>
<svg class="ic" style="left:1895.6px;top:966px" width="9" height="6"><path d="M0.7 0.8 L4.5 4.8 L8.3 0.8" stroke="#a2a2a8" stroke-width="1.2" fill="none"/></svg>
<div class="abs" id="toast"></div>
<svg class="ic" style="left:37.1px;top:844.9px" width="16.4" height="16.4" viewBox="0 0 16 16"><circle cx="8" cy="8" r="8" fill="#07a04f"/><path d="M4.1 8.5 L6.9 11.2 L12 5.5" stroke="#fff" stroke-width="1.65" fill="none" stroke-linecap="round" stroke-linejoin="round"/></svg>
<div class="t" style="left:61.80px;top:846.45px;font-size:14px;font-weight:700;color:#f6f6f6;transform:scaleX(0.9200);">Screenshot Taken</div>
<svg class="ic" style="left:311.3px;top:848.4px" width="10" height="10"><path d="M0.6 0.6 L9.4 9.4 M9.4 0.6 L0.6 9.4" stroke="#f0f0f0" stroke-width="1.5"/></svg>
<div class="t" style="left:61.80px;top:870.45px;font-size:14px;color:#f6f6f6;transform:scaleX(0.9650);-webkit-text-stroke:0.3px #f6f6f6;">&quot;HardwareSPI.png&quot; saved to disk.</div>
<div class="pbtn" style="left:62px;width:47.8px"></div><div class="pbtn" style="left:118.1px;width:83.6px"></div>
<div class="t" style="left:72.30px;top:898.14px;font-size:12px;font-weight:700;color:#e0e0e0;transform:scaleX(0.9031);">Open</div>
<div class="t" style="left:129.10px;top:898.14px;font-size:12px;font-weight:700;color:#e0e0e0;transform:scaleX(0.8914);">Open Folder</div>
</body>
</html>
